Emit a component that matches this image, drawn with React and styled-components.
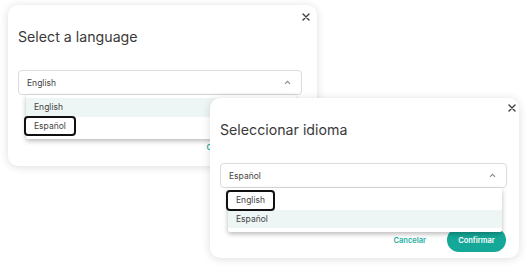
import React from 'react';
import styled, { createGlobalStyle } from 'styled-components';

const Global = createGlobalStyle`
  html, body {
    margin: 0;
    padding: 0;
    background: #fff;
    font-family: Inter, "Noto Sans", sans-serif;
    color: #333;
  }
`;

const Stage = styled.div`
  position: relative;
  width: 528px;
  height: 270px;
  overflow: hidden;
  background: #fff;
`;

const Card = styled.div`
  position: absolute;
  z-index: 1;
  left: ${p => p.x}px;
  top: ${p => p.y}px;
  width: 309px;
  height: ${p => p.h}px;
  box-sizing: border-box;
  padding: 22px ${p => p.padRight}px 0 10px;
  background: #fff;
  border-radius: 10px;
  box-shadow: 0 1px 8px rgba(0, 0, 0, 0.14);
  display: flex;
  flex-direction: column;
`;

const Close = styled.button`
  position: absolute;
  top: ${p => p.top}px;
  right: ${p => p.right}px;
  width: 10px;
  height: 10px;
  padding: 0;
  border: 0;
  background: none;
  display: flex;
  align-items: center;
  justify-content: center;
`;

const Title = styled.h2`
  margin: 0;
  font-size: 14.2px;
  line-height: 20px;
  font-weight: 400;
  color: #3a3a3a;
`;

const SelectWrap = styled.div`
  position: relative;
  margin-top: 23px;
`;

const SelectBox = styled.div`
  height: 25px;
  box-sizing: border-box;
  border: 1px solid #dcdcdc;
  border-radius: 4px;
  padding: 0 10px 0 8px;
  display: flex;
  align-items: center;
  justify-content: space-between;
  font-size: 8.5px;
  color: #444;
`;

const Menu = styled.ul`
  position: absolute;
  top: 25px;
  left: 8px;
  right: ${p => p.right}px;
  margin: 0;
  padding: 3px 0 4px;
  list-style: none;
  background: #fff;
  border-radius: 2px;
  box-shadow: 0 2px 5px rgba(0, 0, 0, 0.28);
  z-index: 2;
`;

const Option = styled.li`
  height: 18.5px;
  display: flex;
  align-items: center;
  padding-left: 8px;
  font-size: 8.5px;
  color: #444;
  background: ${p => (p.active ? '#edf6f4' : 'transparent')};
`;

const Marked = styled.span`
  display: inline-block;
  margin-left: -10px;
  padding: 4px 8px 4px 8px;
  border: 2.5px solid #111;
  border-radius: 4px;
  line-height: 1;
`;

const Footer = styled.div`
  margin-top: 40px;
  display: flex;
  justify-content: flex-end;
  align-items: center;
  gap: 21px;
`;

const TextButton = styled.button`
  border: 0;
  background: none;
  padding: 0;
  font-family: inherit;
  font-size: 7.5px;
  font-weight: 600;
  color: #22b0a2;
`;

const PillButton = styled.button`
  width: 59px;
  height: 24px;
  border: 0;
  border-radius: 12px;
  background: #15a898;
  color: #fff;
  font-family: inherit;
  font-size: 7.5px;
  font-weight: 600;
`;

const CloseIcon = () => (
  <svg width="8" height="8" viewBox="0 0 8 8">
    <path d="M1 1L7 7M7 1L1 7" stroke="#3d3d3d" strokeWidth="1.4" strokeLinecap="round" />
  </svg>
);

const Chevron = () => (
  <svg width="7" height="5" viewBox="0 0 7 5">
    <path d="M1 3.8L3.5 1.3L6 3.8" fill="none" stroke="#8a8a8a" strokeWidth="1.1" />
  </svg>
);

const Dialog = ({ x, y, h, padRight, closeTop, closeRight, menuRight, footerGap, title, value, options, active, marked, cancel, confirm }) => (
  <Card x={x} y={y} h={h} padRight={padRight}>
    <Close top={closeTop} right={closeRight}><CloseIcon /></Close>
    <Title>{title}</Title>
    <SelectWrap>
      <SelectBox>
        <span>{value}</span>
        <Chevron />
      </SelectBox>
      <Menu right={menuRight}>
        {options.map(o => (
          <Option key={o} active={o === active}>
            {o === marked ? <Marked>{o}</Marked> : o}
          </Option>
        ))}
      </Menu>
    </SelectWrap>
    <Footer style={{ marginRight: footerGap }}>
      <TextButton>{cancel}</TextButton>
      <PillButton>{confirm}</PillButton>
    </Footer>
  </Card>
);

const App = () => (
  <Stage>
    <Global />
    <Dialog
      x={8} y={5} h={161} padRight={15} closeTop={7} closeRight={6} menuRight={6} footerGap={-17}
      title="Select a language" value="English"
      options={['English', 'Español']} active="English" marked="Español"
      cancel="Cancelar" confirm="Confirmar"
    />
    <Dialog
      x={210} y={98} h={160} padRight={12} closeTop={5} closeRight={2} menuRight={5} footerGap={1}
      title="Seleccionar idioma" value="Español"
      options={['English', 'Español']} active="Español" marked="English"
      cancel="Cancelar" confirm="Confirmar"
    />
  </Stage>
);

export default App;
